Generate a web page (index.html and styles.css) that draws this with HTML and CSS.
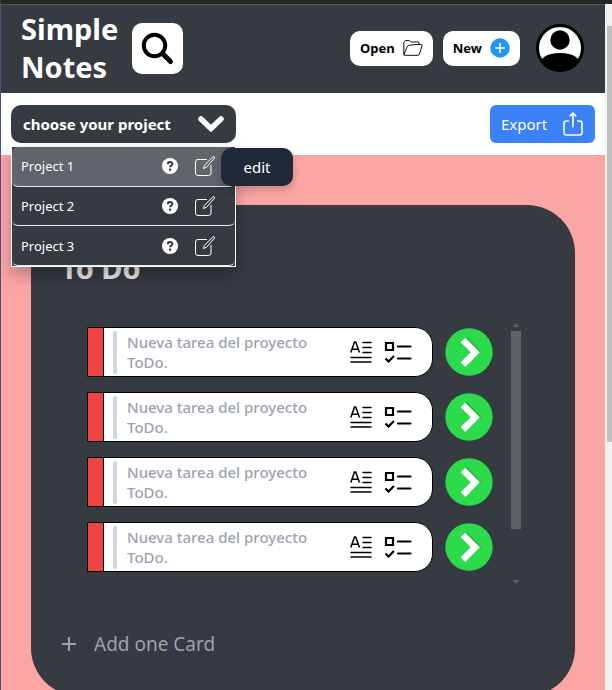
FILE: index.html
```html
<!DOCTYPE html>
<html lang="en">
<head>
<meta charset="utf-8">
<meta name="viewport" content="width=device-width, initial-scale=1">
<title>Simple Notes</title>
<link rel="stylesheet" href="styles.css">
</head>
<body>
<svg class="defs" aria-hidden="true">
  <symbol id="help" viewBox="0 0 16 16"><circle cx="8" cy="8" r="8" fill="#fff"/><path d="M5.800 6.200C5.800 3.200 10.300 3.300 10.300 6c0 1.600-2.200 1.500-2.200 3.200" fill="none" stroke="#343840" stroke-width="2"/><rect x="7" y="10.600" width="2.200" height="2.100" fill="#343840"/></symbol>
  <symbol id="pencil" viewBox="0 0 22 22"><path d="M13 4.500H4A2.500 2.500 0 0 0 1.500 7v11A2.500 2.500 0 0 0 4 20.500h10.500A2.500 2.500 0 0 0 17 18v-8" fill="none" stroke="#fff" stroke-width="1"/><path d="m9.500 13.500.8-3 8.500-8.600q1.600-.9 1.900.9l-8.200 9.500z" fill="none" stroke="#fff" stroke-width="1" stroke-linejoin="round"/></symbol>
  <symbol id="text" viewBox="0 0 22 22"><path d="M.8 11.500 4.500 1h1.200l3.800 10.500M2.200 8.200h5.900" fill="none" stroke="#000" stroke-width="1.500"/><path d="M13 1.500h8M13 6.500h8M13 11.500h8M1 16.500h20M1 21h20" stroke="#000" stroke-width="1.500" stroke-linecap="round"/></symbol>
  <symbol id="checks" viewBox="0 0 28 22"><path d="M2 2h7v7H2zM1.500 17.500l3 3 5.500-5.500" fill="none" stroke="#000" stroke-width="2.200"/><path d="M14 5.500h12.500M14 17.500h12.500" stroke="#000" stroke-width="2.200" stroke-linecap="round"/></symbol>
  <symbol id="next" viewBox="0 0 48 48"><circle cx="24" cy="24" r="23.700" fill="#2bdb4b"/><path d="m22 8.500 14.500 15.500-2 2L20 11z" fill="#24b841"/><path d="m18 12 12.300 12.300L18 36.600" fill="none" stroke="#fff" stroke-width="6.500"/></symbol>
</svg>
<div class="window">
  <div class="page">
    <header class="header">
      <h1 class="brand">Simple Notes</h1>
      <button class="search" aria-label="Search"><svg viewBox="0 0 51 51"><circle cx="22.500" cy="22.500" r="10.700" fill="none" stroke="#000" stroke-width="4"/><path d="m30.500 30.500 8 8" stroke="#000" stroke-width="5" stroke-linecap="round"/></svg></button>
      <div class="actions">
        <button class="pill">Open <svg class="folder" viewBox="0 0 20 18"><path d="M.8 16V3.500l1.500-2h4l1.500 1.500H15q1.300 0 1.300 2.500M.8 16 4.300 7.200l1.500-.9 7.200-.8h5.500q.9 0 .6 1L16.500 15q-.4 1.300-1.500 1.300H1.500Q.8 16.300.8 16z" fill="none" stroke="#111" stroke-width="1"/></svg></button>
        <button class="pill">New <svg class="plus" viewBox="0 0 20 20"><circle cx="10" cy="10" r="9.700" fill="#2196f3"/><path d="M10 5v10M5 10h10" stroke="#fff" stroke-width="1.400"/></svg></button>
      </div>
      <button class="avatar" aria-label="Account"><svg viewBox="0 0 48 48"><defs><clipPath id="face"><circle cx="24" cy="24" r="22"/></clipPath></defs><circle cx="24" cy="24" r="22.500" fill="#fff" stroke="#000" stroke-width="3"/><g clip-path="url(#face)"><circle cx="24" cy="16" r="9.700"/><path d="M2 44q2-15 22-15t22 15v4H2z"/></g></svg></button>
    </header>
    <div class="toolbar">
      <div class="picker">
        <button class="choose" aria-expanded="true">choose your project <svg viewBox="0 0 26 16"><path d="m3 3 10 9.500L23 3" fill="none" stroke="#fff" stroke-width="5.500" stroke-linecap="round"/></svg></button>
        <ul class="menu">
          <li class="project active"><span>Project 1</span><button class="icon help" aria-label="Help"><svg><use href="#help"/></svg></button><button class="icon edit" aria-label="Edit"><svg><use href="#pencil"/></svg></button><span class="tip" role="tooltip">edit</span></li>
          <li class="project"><span>Project 2</span><button class="icon help" aria-label="Help"><svg><use href="#help"/></svg></button><button class="icon edit" aria-label="Edit"><svg><use href="#pencil"/></svg></button></li>
          <li class="project"><span>Project 3</span><button class="icon help" aria-label="Help"><svg><use href="#help"/></svg></button><button class="icon edit" aria-label="Edit"><svg><use href="#pencil"/></svg></button></li>
        </ul>
      </div>
      <button class="export">Export <svg viewBox="0 0 20 24"><path d="M6 9H3.500Q1 9 1 11.500v9Q1 23 3.500 23h13q2.500 0 2.500-2.500v-9Q19 9 16.500 9H14M10 15.500V1.500M6.700 4.300 10 1.200l3.300 3.100" fill="none" stroke="#fff" stroke-width="1.600"/></svg></button>
    </div>
    <main class="board">
      <section class="column">
        <h2>To Do</h2>
        <div class="scroller">
          <ul class="tasks">
            <li class="task"><div class="note"><i class="tag"></i><i class="bar"></i><p>Nueva tarea del proyecto ToDo.</p><button class="icon text" aria-label="Description"><svg><use href="#text"/></svg></button><button class="icon checks" aria-label="Checklist"><svg><use href="#checks"/></svg></button></div><button class="icon next" aria-label="Next"><svg><use href="#next"/></svg></button></li>
            <li class="task"><div class="note"><i class="tag"></i><i class="bar"></i><p>Nueva tarea del proyecto ToDo.</p><button class="icon text" aria-label="Description"><svg><use href="#text"/></svg></button><button class="icon checks" aria-label="Checklist"><svg><use href="#checks"/></svg></button></div><button class="icon next" aria-label="Next"><svg><use href="#next"/></svg></button></li>
            <li class="task"><div class="note"><i class="tag"></i><i class="bar"></i><p>Nueva tarea del proyecto ToDo.</p><button class="icon text" aria-label="Description"><svg><use href="#text"/></svg></button><button class="icon checks" aria-label="Checklist"><svg><use href="#checks"/></svg></button></div><button class="icon next" aria-label="Next"><svg><use href="#next"/></svg></button></li>
            <li class="task"><div class="note"><i class="tag"></i><i class="bar"></i><p>Nueva tarea del proyecto ToDo.</p><button class="icon text" aria-label="Description"><svg><use href="#text"/></svg></button><button class="icon checks" aria-label="Checklist"><svg><use href="#checks"/></svg></button></div><button class="icon next" aria-label="Next"><svg><use href="#next"/></svg></button></li>
          </ul>
          <div class="track" aria-hidden="true"><svg viewBox="0 0 6 4"><path d="M3 0 6 4H0z"/></svg><i></i><svg viewBox="0 0 6 4"><path d="M0 0h6L3 4z"/></svg></div>
        </div>
        <button class="add"><svg viewBox="0 0 14 14"><path d="M7 0v14M0 7h14" stroke="currentColor" stroke-width="2"/></svg>Add one Card</button>
      </section>
    </main>
  </div>
  <div class="rail" aria-hidden="true"><i></i></div>
</div>
</body>
</html>
```
FILE: styles.css
```css
* { box-sizing: border-box; }
body { margin: 0; font-family: "Noto Sans", "Open Sans", sans-serif; }
h1, h2, p, ul { margin: 0; padding: 0; }
ul { list-style: none; }
button { font: inherit; border: 0; padding: 0; background: none; color: inherit; cursor: pointer; }
svg { display: block; flex: none; }
.defs { display: none; }

.window { display: flex; height: 100vh; overflow: hidden; border-top: 4px solid #262626; border-left: 1px solid #46547a; }
.page { flex: 1; min-width: 0; border-top: 1px solid #555; }
.rail { width: 7px; padding: 22px 0 0 2px; background: #f1f1f1; }
.rail i { display: block; height: 416px; background: #c1c1c1; }

.header { display: flex; align-items: center; height: 88px; padding: 0 21px 2px 20px; background: #363a41; color: #fff; }
.brand { width: 111px; font-size: 29px; line-height: 38px; font-weight: 700; }
.search { width: 51px; height: 51px; border-radius: 10px; background: #fff; }
.actions { display: flex; gap: 10px; margin-left: auto; margin-right: 16px; }
.pill { display: flex; align-items: center; gap: 8px; height: 35px; padding: 0 10px; border-radius: 10px; background: #fff; color: #000; font-size: 13px; font-weight: 700; }
.folder { width: 20px; height: 18px; }
.plus { width: 20px; height: 20px; }
.avatar { width: 48px; height: 48px; }

.toolbar { display: flex; justify-content: space-between; padding: 12px 10px; background: #fff; }
.picker { position: relative; width: 225px; }
.choose { display: flex; align-items: center; justify-content: space-between; width: 100%; height: 38px; padding: 0 12px; border-radius: 10px; background: #363a41; color: #fff; font-size: 15px; font-weight: 700; }
.choose svg { width: 26px; height: 16px; }
.menu { position: absolute; z-index: 2; top: 42px; left: 0; display: flex; flex-direction: column; width: 100%; height: 120px; border: 1px solid #fff; border-top: 0; background: #363a41; box-shadow: 0 8px 16px rgba(0, 0, 0, .25); }
.project { position: relative; flex: 1; display: flex; align-items: center; padding: 0 19px 0 9px; border-bottom: 1px solid #e5e7eb; border-radius: 6px; color: #fff; font-size: 13px; }
.active { background: #60646b; }
.icon svg { width: 100%; height: 100%; }
.help { width: 16px; height: 16px; margin-left: auto; }
.edit { width: 22px; height: 22px; margin-left: 16px; }
.tip { position: absolute; top: 1px; left: 209px; width: 72px; border-radius: 10px; background: #1f2937; font-size: 15px; line-height: 38px; text-align: center; box-shadow: 0 4px 8px rgba(0, 0, 0, .2); }
.export { display: flex; align-items: center; justify-content: space-between; width: 105px; height: 38px; padding: 0 12px 0 11px; border-radius: 6px; background: #3b82f6; color: #fff; font-size: 15px; }
.export svg { width: 20px; height: 24px; }

.board { min-height: 100%; padding: 50px 30px; background: #fca5a5; }
.column { padding: 43px 30px 38px; border-radius: 48px; background: #363a41; }
.column h2 { color: #e8e8e8; font-size: 29px; line-height: 40px; font-weight: 700; }
.scroller { display: flex; height: 265px; margin: 33px 24px 0 26px; }
.tasks { flex: 1; display: flex; flex-direction: column; gap: 15px; padding-top: 6px; }
.task { display: flex; align-items: center; gap: 12px; height: 50px; }
.note { flex: 1; display: flex; align-items: center; height: 50px; padding-right: 20px; border: 1px solid #000; border-radius: 0 18px 18px 0; background: #fff; }
.tag { width: 16px; height: 100%; border-right: 1px solid #000; background: #ef4444; }
.bar { width: 4px; height: 43px; margin: 0 10px 0 9px; border-radius: 2px; background: #d1d5db; }
.note p { flex: 1; color: #9ca3af; font-size: 15px; line-height: 20px; font-weight: 500; padding-right: 32px; }
.text { width: 22px; height: 22px; }
.checks { width: 28px; height: 22px; margin-left: 12px; }
.next { width: 48px; height: 48px; }
.track { display: flex; flex-direction: column; align-items: center; width: 10px; margin-left: 18px; padding: 2px 0; }
.track svg { width: 6px; height: 4px; fill: #606366; }
.track i { width: 10px; height: 198px; margin: 4px 0 auto; background: #606366; }
.add { display: flex; align-items: center; gap: 18px; margin-top: 44px; padding-left: 1px; color: #9ca3af; font-size: 19px; line-height: 28px; }
.add svg { width: 14px; height: 14px; }
```
